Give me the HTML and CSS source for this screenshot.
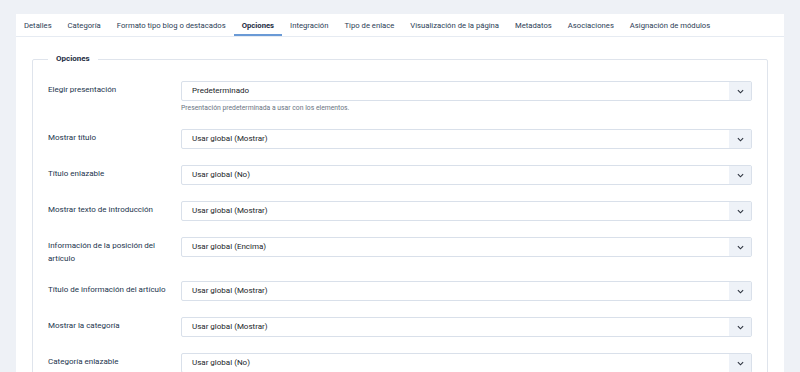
FILE: index.html
```html
<!DOCTYPE html>
<html lang="es">
<head>
<meta charset="UTF-8" />
<meta name="viewport" content="width=device-width, initial-scale=1" />
<title>Opciones</title>
<link rel="stylesheet" href="styles.css">
</head>
<body>

<div class="page">
  <div class="card">

    <div class="tabs">
      <div class="tab">Detalles</div>
      <div class="tab">Categoría</div>
      <div class="tab">Formato tipo blog o destacados</div>
      <div class="tab active">Opciones</div>
      <div class="tab">Integración</div>
      <div class="tab">Tipo de enlace</div>
      <div class="tab">Visualización de la página</div>
      <div class="tab">Metadatos</div>
      <div class="tab">Asociaciones</div>
      <div class="tab">Asignación de módulos</div>
    </div>

    <div class="card-body">
      <fieldset class="options">
        <legend>Opciones</legend>

        <div class="field">
          <label>Elegir presentación</label>
          <div class="control">
            <div class="select"><span>Predeterminado</span><i class="caret"><svg viewBox="0 0 8 5" width="7" height="5"><polyline points="1,1 4,4 7,1" /></svg></i></div>
            <div class="hint">Presentación predeterminada a usar con los elementos.</div>
          </div>
        </div>

        <div class="field">
          <label>Mostrar título</label>
          <div class="control">
            <div class="select"><span>Usar global (Mostrar)</span><i class="caret"><svg viewBox="0 0 8 5" width="7" height="5"><polyline points="1,1 4,4 7,1" /></svg></i></div>
          </div>
        </div>

        <div class="field">
          <label>Título enlazable</label>
          <div class="control">
            <div class="select"><span>Usar global (No)</span><i class="caret"><svg viewBox="0 0 8 5" width="7" height="5"><polyline points="1,1 4,4 7,1" /></svg></i></div>
          </div>
        </div>

        <div class="field">
          <label>Mostrar texto de introducción</label>
          <div class="control">
            <div class="select"><span>Usar global (Mostrar)</span><i class="caret"><svg viewBox="0 0 8 5" width="7" height="5"><polyline points="1,1 4,4 7,1" /></svg></i></div>
          </div>
        </div>

        <div class="field">
          <label>Información de la posición del artículo</label>
          <div class="control">
            <div class="select"><span>Usar global (Encima)</span><i class="caret"><svg viewBox="0 0 8 5" width="7" height="5"><polyline points="1,1 4,4 7,1" /></svg></i></div>
          </div>
        </div>

        <div class="field">
          <label>Título de información del artículo</label>
          <div class="control">
            <div class="select"><span>Usar global (Mostrar)</span><i class="caret"><svg viewBox="0 0 8 5" width="7" height="5"><polyline points="1,1 4,4 7,1" /></svg></i></div>
          </div>
        </div>

        <div class="field">
          <label>Mostrar la categoría</label>
          <div class="control">
            <div class="select"><span>Usar global (Mostrar)</span><i class="caret"><svg viewBox="0 0 8 5" width="7" height="5"><polyline points="1,1 4,4 7,1" /></svg></i></div>
          </div>
        </div>

        <div class="field">
          <label>Categoría enlazable</label>
          <div class="control">
            <div class="select"><span>Usar global (No)</span><i class="caret"><svg viewBox="0 0 8 5" width="7" height="5"><polyline points="1,1 4,4 7,1" /></svg></i></div>
          </div>
        </div>

      </fieldset>
    </div>

  </div>
</div>

</body>
</html>
```

FILE: styles.css
```css
* {
  box-sizing: border-box;
}
body, html {
  margin: 0; padding: 0;
  height: 100%;
  background: #eef1f6;
  color: #1f2f45;
  font-family: Roboto, 'Noto Sans', sans-serif;
  overflow: hidden;
}
.page {
  padding: 14px 16px 0 16px;
}
.card {
  background: #fff;
  min-height: 400px;
}
.tabs {
  display: flex;
  height: 23px;
  border-bottom: 1px solid #e6ebf2;
}
.tab {
  padding: 0 8px;
  font-size: 7.7px;
  line-height: 21px;
  padding-top: 1px;
  color: #2b3c55;
  border-bottom: 2px solid transparent;
  white-space: nowrap;
}
.tab.active {
  font-weight: bold;
  color: #1d2c42;
  border-bottom-color: #6a9ad6;
}
.card-body {
  padding: 16px 16px 0;
}
.options {
  margin: 0;
  border: 1px solid #dfe4ec;
  border-radius: 2px;
  padding: 0 15px;
}
.options legend {
  padding: 0 8px;
  font-size: 8px;
  font-weight: bold;
  line-height: 12px;
  color: #1d2c42;
}
.field {
  display: grid;
  grid-template-columns: 133px 1fr;
  margin-top: 16px;
}
.field label {
  font-size: 8px;
  line-height: 12.5px;
  padding: 3px 8px 0 0;
  color: #22344d;
}
.select {
  display: flex;
  height: 20px;
  border: 1px solid #d9e0ea;
  border-radius: 2px;
  font-size: 8px;
  color: #212529;
}
.select span {
  flex: 1;
  padding-left: 10px;
  line-height: 18px;
}
.caret {
  width: 22px;
  background: #eef2f8;
  display: flex;
  align-items: center;
  justify-content: center;
}
.caret polyline {
  fill: none;
  stroke: #2f3540;
  stroke-width: 1.3;
}
.hint {
  font-size: 6.8px;
  line-height: 10px;
  margin-top: 2px;
  color: #6b7482;
}
```
